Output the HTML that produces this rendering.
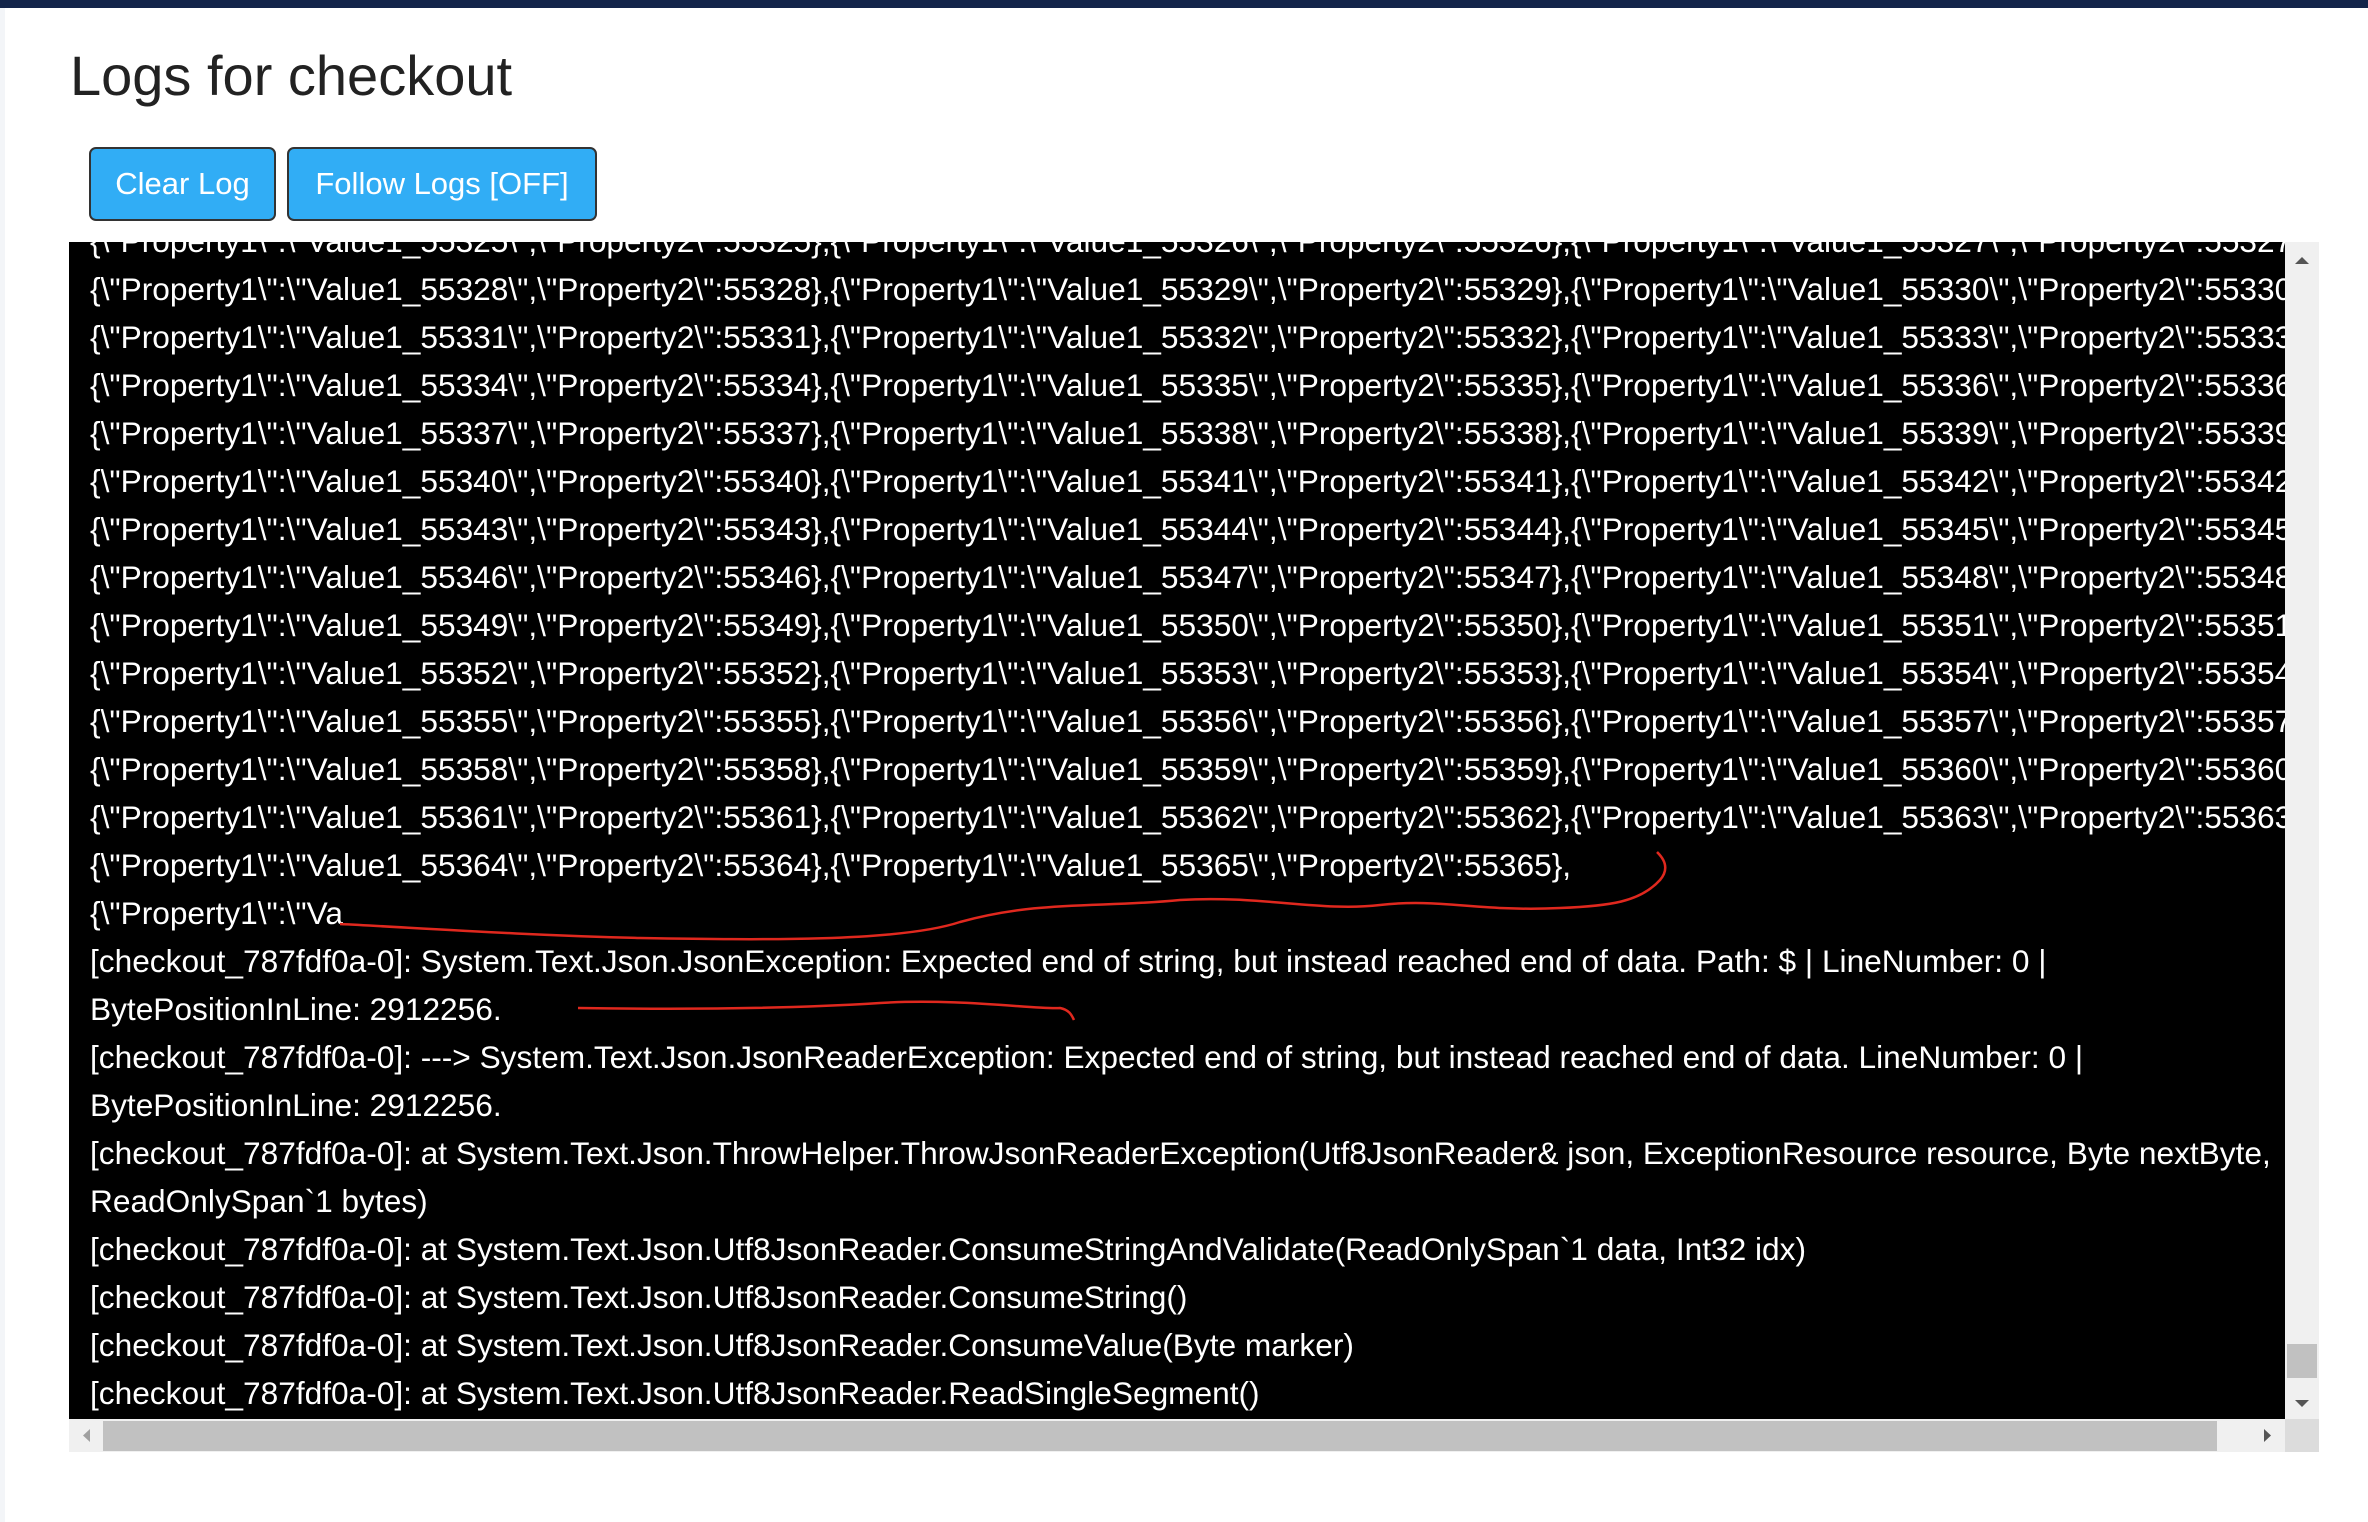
<!DOCTYPE html>
<html><head><meta charset="utf-8"><style>
*{margin:0;padding:0;box-sizing:border-box}
body{width:2368px;height:1522px;background:#fff;font-family:"Liberation Sans",Arial,sans-serif;position:relative;overflow:hidden}
.top{position:absolute;left:0;top:0;width:2368px;height:8px;background:#13254a}
.lstrip{position:absolute;left:0;top:8px;width:5px;height:1514px;background:#f3f5f8}
h1{position:absolute;left:70px;top:43px;font-size:56px;font-weight:400;color:#222;line-height:66px}
.btn{position:absolute;top:147px;height:74px;background:#31adf5;border:2px solid #333;border-radius:7px;color:#fff;font-size:31px;line-height:70px;text-align:center}
.log{position:absolute;left:69px;top:242px;width:2216px;height:1177px;background:#000;overflow:hidden}
.ln{position:absolute;left:21px;white-space:nowrap;color:#fff;font-size:31.65px;line-height:48px;margin-top:-3px}
.vs{position:absolute;left:2285px;top:242px;width:34px;height:1177px;background:#f0f0f0}
.hs{position:absolute;left:69px;top:1419px;width:2216px;height:33px;background:#f0f0f0}
.corner{position:absolute;left:2285px;top:1419px;width:34px;height:33px;background:#dcdcdc}
</style></head><body>
<div class="top"></div><div class="lstrip"></div>
<h1>Logs for checkout</h1>
<div class="btn" style="left:89px;width:187px">Clear Log</div>
<div class="btn" style="left:287px;width:310px">Follow Logs [OFF]</div>
<div class="log">
<div class="ln" style="top:-22px">{\"Property1\":\"Value1_55325\",\"Property2\":55325},{\"Property1\":\"Value1_55326\",\"Property2\":55326},{\"Property1\":\"Value1_55327\",\"Property2\":55327},</div>
<div class="ln" style="top:26px">{\"Property1\":\"Value1_55328\",\"Property2\":55328},{\"Property1\":\"Value1_55329\",\"Property2\":55329},{\"Property1\":\"Value1_55330\",\"Property2\":55330},</div>
<div class="ln" style="top:74px">{\"Property1\":\"Value1_55331\",\"Property2\":55331},{\"Property1\":\"Value1_55332\",\"Property2\":55332},{\"Property1\":\"Value1_55333\",\"Property2\":55333},</div>
<div class="ln" style="top:122px">{\"Property1\":\"Value1_55334\",\"Property2\":55334},{\"Property1\":\"Value1_55335\",\"Property2\":55335},{\"Property1\":\"Value1_55336\",\"Property2\":55336},</div>
<div class="ln" style="top:170px">{\"Property1\":\"Value1_55337\",\"Property2\":55337},{\"Property1\":\"Value1_55338\",\"Property2\":55338},{\"Property1\":\"Value1_55339\",\"Property2\":55339},</div>
<div class="ln" style="top:218px">{\"Property1\":\"Value1_55340\",\"Property2\":55340},{\"Property1\":\"Value1_55341\",\"Property2\":55341},{\"Property1\":\"Value1_55342\",\"Property2\":55342},</div>
<div class="ln" style="top:266px">{\"Property1\":\"Value1_55343\",\"Property2\":55343},{\"Property1\":\"Value1_55344\",\"Property2\":55344},{\"Property1\":\"Value1_55345\",\"Property2\":55345},</div>
<div class="ln" style="top:314px">{\"Property1\":\"Value1_55346\",\"Property2\":55346},{\"Property1\":\"Value1_55347\",\"Property2\":55347},{\"Property1\":\"Value1_55348\",\"Property2\":55348},</div>
<div class="ln" style="top:362px">{\"Property1\":\"Value1_55349\",\"Property2\":55349},{\"Property1\":\"Value1_55350\",\"Property2\":55350},{\"Property1\":\"Value1_55351\",\"Property2\":55351},</div>
<div class="ln" style="top:410px">{\"Property1\":\"Value1_55352\",\"Property2\":55352},{\"Property1\":\"Value1_55353\",\"Property2\":55353},{\"Property1\":\"Value1_55354\",\"Property2\":55354},</div>
<div class="ln" style="top:458px">{\"Property1\":\"Value1_55355\",\"Property2\":55355},{\"Property1\":\"Value1_55356\",\"Property2\":55356},{\"Property1\":\"Value1_55357\",\"Property2\":55357},</div>
<div class="ln" style="top:506px">{\"Property1\":\"Value1_55358\",\"Property2\":55358},{\"Property1\":\"Value1_55359\",\"Property2\":55359},{\"Property1\":\"Value1_55360\",\"Property2\":55360},</div>
<div class="ln" style="top:554px">{\"Property1\":\"Value1_55361\",\"Property2\":55361},{\"Property1\":\"Value1_55362\",\"Property2\":55362},{\"Property1\":\"Value1_55363\",\"Property2\":55363},</div>
<div class="ln" style="top:602px">{\"Property1\":\"Value1_55364\",\"Property2\":55364},{\"Property1\":\"Value1_55365\",\"Property2\":55365},</div>
<div class="ln" style="top:650px">{\"Property1\":\"Va</div>
<div class="ln" style="top:698px">[checkout_787fdf0a-0]: System.Text.Json.JsonException: Expected end of string, but instead reached end of data. Path: $ | LineNumber: 0 |</div>
<div class="ln" style="top:746px">BytePositionInLine: 2912256.</div>
<div class="ln" style="top:794px">[checkout_787fdf0a-0]: ---&gt; System.Text.Json.JsonReaderException: Expected end of string, but instead reached end of data. LineNumber: 0 |</div>
<div class="ln" style="top:842px">BytePositionInLine: 2912256.</div>
<div class="ln" style="top:890px">[checkout_787fdf0a-0]: at System.Text.Json.ThrowHelper.ThrowJsonReaderException(Utf8JsonReader&amp; json, ExceptionResource resource, Byte nextByte,</div>
<div class="ln" style="top:938px">ReadOnlySpan`1 bytes)</div>
<div class="ln" style="top:986px">[checkout_787fdf0a-0]: at System.Text.Json.Utf8JsonReader.ConsumeStringAndValidate(ReadOnlySpan`1 data, Int32 idx)</div>
<div class="ln" style="top:1034px">[checkout_787fdf0a-0]: at System.Text.Json.Utf8JsonReader.ConsumeString()</div>
<div class="ln" style="top:1082px">[checkout_787fdf0a-0]: at System.Text.Json.Utf8JsonReader.ConsumeValue(Byte marker)</div>
<div class="ln" style="top:1130px">[checkout_787fdf0a-0]: at System.Text.Json.Utf8JsonReader.ReadSingleSegment()</div>
</div>
<svg style="position:absolute;left:0;top:0" width="2368" height="1522">
<path d="M340 924 C420 928,520 935,640 938 C760 940,900 942,960 922 C1040 900,1100 908,1180 900 C1260 895,1320 912,1380 905 C1440 898,1480 912,1560 908 C1610 906,1640 902,1660 880 C1672 866,1660 855,1657 852" fill="none" stroke="#e0281e" stroke-width="2.5"/>
<path d="M578 1008 C700 1010,800 1008,880 1003 C960 998,1040 1010,1060 1008 C1070 1010,1072 1016,1074 1020" fill="none" stroke="#e0281e" stroke-width="2.5"/>
</svg>
<div class="vs">
<svg width="34" height="1177" style="position:absolute;left:0;top:0"><path d="M10 22 L17 15 L24 22Z" fill="#555"/><rect x="2" y="1102" width="30" height="34" fill="#c1c1c1"/><path d="M10 1158 L17 1165 L24 1158Z" fill="#555"/></svg>
</div>
<div class="hs">
<svg width="2216" height="33" style="position:absolute;left:0;top:0"><path d="M21 10 L14 16.5 L21 23Z" fill="#a0a0a0"/><rect x="34" y="2" width="2114" height="30" fill="#c1c1c1"/><path d="M2195 10 L2202 16.5 L2195 23Z" fill="#555"/></svg>
</div>
<div class="corner"></div>
</body></html>
